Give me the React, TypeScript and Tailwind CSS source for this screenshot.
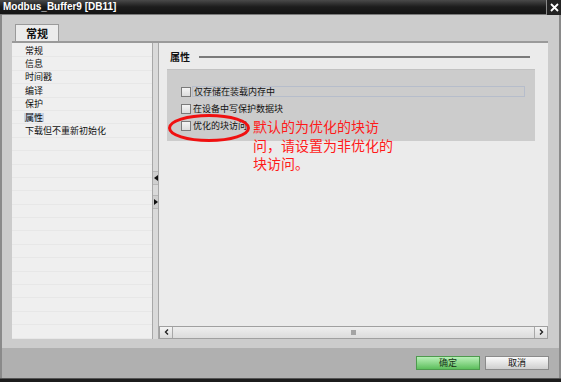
import React from 'react'

const cjk = { fontFamily: "'Noto Sans CJK SC', 'Noto Sans', sans-serif" }

const navItems = ['常规', '信息', '时间戳', '编译', '保护', '属性', '下载但不重新初始化']

function Checkbox() {
  return (
    <div className="w-[10px] h-[10px] shrink-0 border border-[#7a7a7a] bg-gradient-to-b from-[#f4f4f4] to-[#dcdcdc]" />
  )
}

function Splitter() {
  return (
    <div className="w-[7px] shrink-0 flex flex-col items-center bg-[#dadada] border-l border-r border-[#a8a8a8]">
      <div className="mt-[128px] w-[5px] h-[14px] bg-[#cfcfcf] border-y border-[#b8b8b8] flex items-center justify-center">
        <svg width="4" height="6" viewBox="0 0 4 6"><path d="M4 0 L0 3 L4 6 Z" fill="#111" /></svg>
      </div>
      <div className="mt-[10px] w-[5px] h-[14px] bg-[#cfcfcf] border-y border-[#b8b8b8] flex items-center justify-center">
        <svg width="4" height="6" viewBox="0 0 4 6"><path d="M0 0 L4 3 L0 6 Z" fill="#111" /></svg>
      </div>
    </div>
  )
}

function HScrollbar() {
  return (
    <div className="h-[13px] flex bg-[#e4e4e4] border border-[#a0a0a0]">
      <div className="w-[13px] h-full flex items-center justify-center border-r border-[#a8a8a8] bg-gradient-to-b from-[#f4f4f4] to-[#dadada]">
        <svg width="5" height="6" viewBox="0 0 5 6"><path d="M4 0.5 L1.5 3 L4 5.5" stroke="#222" strokeWidth="1.4" fill="none" /></svg>
      </div>
      <div className="flex-1 flex items-center justify-center bg-gradient-to-b from-[#eeeeee] to-[#dcdcdc]">
        <div className="w-[5px] h-[5px] bg-[#a4a4a4]" />
      </div>
      <div className="w-[13px] h-full flex items-center justify-center border-l border-[#a8a8a8] bg-gradient-to-b from-[#f4f4f4] to-[#dadada]">
        <svg width="5" height="6" viewBox="0 0 5 6"><path d="M1 0.5 L3.5 3 L1 5.5" stroke="#222" strokeWidth="1.4" fill="none" /></svg>
      </div>
    </div>
  )
}

export default function App() {
  return (
    <div className="w-[561px] h-[382px] flex flex-col bg-[#cccccc] overflow-hidden" style={cjk}>
      {/* title bar */}
      <div className="h-[15px] shrink-0 flex items-center bg-gradient-to-b from-[#4a4a4a] via-[#1c1c1c] to-[#141414] border-b border-[#7a7a7a]">
        <span className="pl-[3px] flex-1 text-white font-bold text-[10px] leading-none" style={{ fontFamily: "'Liberation Sans', sans-serif" }}>
          Modbus_Buffer9 [DB11]
        </span>
        <div className="w-[15px] h-[15px] flex items-center justify-center border-l border-[#8a8a8a] bg-[#222]">
          <svg width="9" height="9" viewBox="0 0 9 9"><path d="M1 1 L8 8 M8 1 L1 8" stroke="#fff" strokeWidth="1.8" /></svg>
        </div>
      </div>

      {/* body */}
      <div className="flex-1 flex flex-col pl-[10px] pr-[11px] pb-[9px] border-l-[2px] border-r-[2px] border-[#8a8a8a]">
        <div className="h-[26px] shrink-0 flex items-end pl-[3px]">
          <div className="w-[44px] h-[17px] flex items-center justify-center bg-[#ececec] border border-b-0 border-[#9a9a9a] text-[11px] font-bold text-[#111]">
            常规
          </div>
        </div>

        <div className="flex-1 flex border-t-[2px] border-[#9a9a9a] min-h-0">
          {/* nav */}
          <div className="w-[140px] shrink-0 bg-[#efefef] pt-[1px] overflow-hidden">
            {Array.from({ length: 22 }).map((_, i) => (
              <div key={i} className="h-[13.4px] flex items-center pl-[13px] border-b border-[#e7e7e7] text-[9px] text-[#111] leading-none">
                {navItems[i] && (
                  <span className={i === 5 ? 'bg-[#c6d4e4] px-[1px] -ml-[1px]' : ''}>{navItems[i]}</span>
                )}
              </div>
            ))}
          </div>

          <Splitter />

          {/* properties */}
          <div className="flex-1 flex flex-col bg-[#ebebeb]">
            <div className="relative flex-1 pl-[8px]">
              <div className="mt-[7px] h-[14px] flex items-center">
                <span className="ml-[3px] text-[10px] font-bold text-[#111] leading-none">属性</span>
                <div className="flex-1 ml-[9px] mr-[18px] h-[2px] bg-[#7a7a7a]" />
              </div>

              <div className="mt-[5px] w-[368px] h-[72px] bg-[#cccccc] border-t border-[#c2c2c2] pt-[16px] pl-[14px] pr-[10px] flex flex-col gap-[6px]">
                <div className="h-[11px] flex items-center">
                  <Checkbox />
                  <div className="flex-1 h-[11px] ml-[1px] flex items-center border border-[#b6bdcb] pl-[1px] text-[9px] text-[#111] leading-none">
                    仅存储在装载内存中
                  </div>
                </div>
                <div className="h-[11px] flex items-center gap-[2px] text-[9px] text-[#111] leading-none">
                  <Checkbox />
                  <span>在设备中写保护数据块</span>
                </div>
                <div className="h-[11px] flex items-center gap-[2px] text-[9px] text-[#111] leading-none">
                  <Checkbox />
                  <span>优化的块访问</span>
                </div>
              </div>

              {/* annotation */}
              <svg className="absolute left-[9px] top-[71px]" width="84" height="30" viewBox="0 0 84 30">
                <ellipse cx="41" cy="14" rx="39.5" ry="12.5" fill="none" stroke="#f01010" strokeWidth="3" />
              </svg>
              <div className="absolute left-[94px] top-[74px] w-[150px] text-[14px] leading-[18.5px] text-[#ff1a1a]">
                <div>默认的为优化的块访</div>
                <div>问，请设置为非优化的</div>
                <div>块访问。</div>
              </div>
            </div>
            <HScrollbar />
          </div>
        </div>
      </div>

      {/* button bar */}
      <div className="h-[30px] shrink-0 flex justify-end items-start pt-[8px] pr-[10px] gap-[5px] bg-[#b0b0b0] border-l-[2px] border-r-[2px] border-[#8a8a8a]">
        <div className="w-[64px] h-[14px] flex items-center justify-center border border-[#4e9a4e] bg-gradient-to-b from-[#b8f0b8] to-[#5cbf5c] text-[9px] text-[#143214] leading-none">
          确定
        </div>
        <div className="w-[64px] h-[14px] flex items-center justify-center border border-[#8a8a8a] bg-gradient-to-b from-[#fafafa] to-[#cfcfcf] text-[9px] text-[#111] leading-none">
          取消
        </div>
      </div>
      <div className="h-[5px] shrink-0 bg-[#1c1c1c] border-t border-[#555]" />
    </div>
  )
}
